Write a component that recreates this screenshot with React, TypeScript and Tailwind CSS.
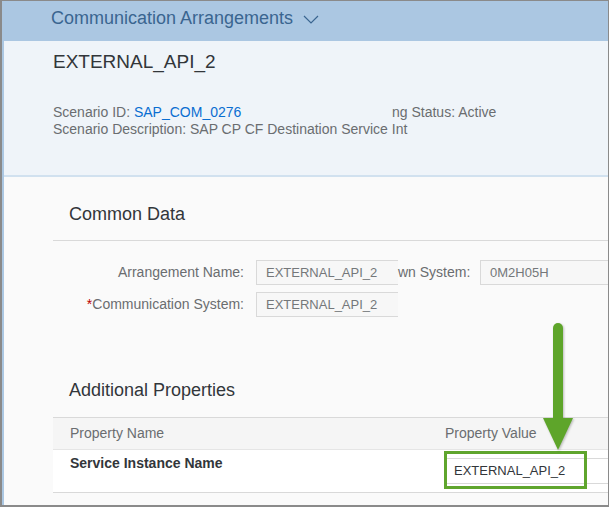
export default function App() {
  return (
    <div
      className="relative flex h-[507px] w-[609px] flex-col overflow-hidden border-t border-r border-b-2 border-l-2 border-[#8a8a8a] bg-[#abc7e2]"
      style={{ fontFamily: '"Liberation Sans", Arial, sans-serif' }}
    >
      {/* gap in the top frame line */}
      <div className="absolute top-[-1px] left-[376px] h-[1px] w-[55px] bg-[#abc7e2]" />

      {/* shell bar */}
      <div className="flex h-[40px] shrink-0 items-start pt-[6px] pl-[49px]">
        <span className="text-[18px] leading-[22px] text-[#3a6590]">Communication Arrangements</span>
        <svg className="mt-[8px] ml-[10px]" width="16" height="9" viewBox="0 0 16 9" fill="none">
          <path d="M1 1l7 7 7-7" stroke="#3a6590" strokeWidth="1.2" />
        </svg>
      </div>

      <div className="ml-[2px] flex flex-1 flex-col bg-[#fafafa]">
        {/* object header */}
        <div className="h-[136px] shrink-0 border-b-2 border-[#d1e1ef] bg-[#eff4f9] pt-[9px] pl-[49px]">
          <div className="text-[19px] leading-[24px] text-[#32363a]">EXTERNAL_API_2</div>
          <div className="mt-[30px] text-[14px] leading-[17px] whitespace-nowrap text-[#6a6d70]">
            <div className="flex">
              <div className="w-[339px] shrink-0">
                Scenario ID: <span className="text-[#0a6ed1]">SAP_COM_0276</span>
              </div>
              <div>ng Status: Active</div>
            </div>
            <div>Scenario Description: SAP CP CF Destination Service Int</div>
          </div>
        </div>

        {/* common data */}
        <div className="ml-[49px] pt-[26px]">
          <div className="border-b border-[#d9d9d9] pb-[15px] pl-[16px] text-[18px] leading-[22px] text-[#32363a]">
            Common Data
          </div>

          <div className="mt-[19px] flex h-[25px] items-center whitespace-nowrap">
            <div className="w-[191px] shrink-0 text-right text-[14px] text-[#6a6d70]">Arrangement Name:</div>
            <div className="ml-[12px] flex h-[25px] w-[142px] shrink-0 items-center border border-r-0 border-[#d9d9d9] bg-[#f7f7f7] pl-[9px] text-[13px] text-[#74777a]">
              EXTERNAL_API_2
            </div>
            <div className="w-[70px] shrink-0 text-[14px] text-[#6a6d70]">wn System:</div>
            <div className="ml-[12px] flex h-[25px] w-[140px] shrink-0 items-center border border-[#d9d9d9] bg-[#f7f7f7] pl-[9px] text-[13px] text-[#74777a]">
              0M2H05H
            </div>
          </div>

          <div className="mt-[7px] flex h-[25px] items-center whitespace-nowrap">
            <div className="w-[191px] shrink-0 text-right text-[14px] text-[#6a6d70]">
              <span className="text-[#bb0000]">*</span>Communication System:
            </div>
            <div className="ml-[12px] flex h-[25px] w-[142px] shrink-0 items-center border border-r-0 border-[#d9d9d9] bg-[#f7f7f7] pl-[9px] text-[13px] text-[#74777a]">
              EXTERNAL_API_2
            </div>
          </div>

          {/* additional properties */}
          <div className="mt-[62px] pl-[16px] text-[18px] leading-[22px] text-[#32363a]">Additional Properties</div>

          <div className="mt-[16px]">
            <div className="flex h-[33px] items-center border-t border-b border-t-[#d9d9d9] border-b-[#e5e5e5] bg-[#f5f5f5] text-[14px] text-[#6a6d70]">
              <div className="w-[375px] shrink-0 pl-[17px]">Property Name</div>
              <div className="pl-[17px]">Property Value</div>
            </div>
            <div className="flex h-[43px] border-b border-[#d9d9d9] bg-white">
              <div className="w-[375px] shrink-0 pt-[5px] pl-[17px] text-[14px] leading-[17px] font-bold text-[#32363a]">
                Service Instance Name
              </div>
              <div className="flex-1 pt-[8px] pl-[19px]">
                <div className="flex h-[26px] items-center border-y border-[#d9d9d9] pl-[7px] text-[13px] text-[#32363a]">
                  EXTERNAL_API_2
                </div>
              </div>
            </div>
          </div>
        </div>
      </div>

      {/* highlight annotations */}
      <div className="absolute top-[450px] left-[442px] h-[38px] w-[143px] border-[3px] border-[#5fa52d]" />
      <svg
        className="absolute top-[319px] left-[538px] drop-shadow-[1px_1px_1px_rgba(0,0,0,0.25)]"
        width="36"
        height="132"
        viewBox="0 0 36 132"
      >
        <rect x="13" y="3" width="10" height="100" rx="5" fill="#5ea52a" />
        <polygon points="3,98 33,98 18,130" fill="#5ea52a" />
      </svg>
    </div>
  );
}
